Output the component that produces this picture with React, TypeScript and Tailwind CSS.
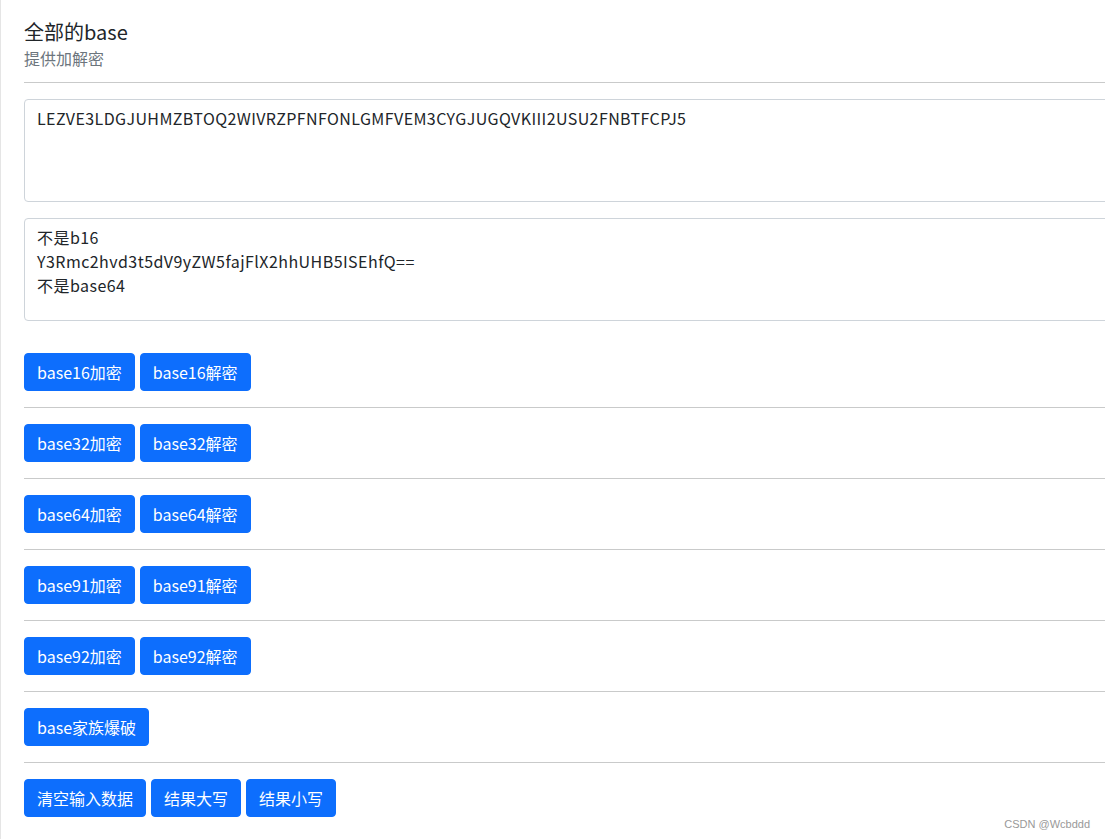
const font = { fontFamily: '"Segoe UI", "Noto Sans CJK SC", "Noto Sans", sans-serif' };

function Btn({ children }: { children: React.ReactNode }) {
  return (
    <button className="h-[38px] px-[12px] rounded-[4px] bg-[#0d6efd] text-white text-[16px] leading-[24px] border border-[#0d6efd] whitespace-nowrap">
      {children}
    </button>
  );
}

function Divider() {
  return <hr className="my-4 border-0 border-t border-[#c9caca]" />;
}

export default function App() {
  const groups = ["16", "32", "64", "91", "92"];

  return (
    <div className="relative h-[839px] overflow-hidden bg-white text-[#212529] border-l border-[#e5e5e5]" style={font}>
      <div className="w-[1160px] pl-[23px] pt-[20px]">
        <h5 className="text-[20px] leading-[24px] font-normal">全部的base</h5>
        <p className="mt-[2px] text-[16px] leading-[24px] text-[#6c757d]">提供加解密</p>
        <hr className="mt-[12px] mb-4 border-0 border-t border-[#c9caca]" />

        <textarea
          className="block w-full h-[103px] px-[12px] py-[6px] text-[16px] leading-[24px] tracking-[0.4px] border border-[#ced4da] rounded-[4px] resize-none outline-none"
          defaultValue="LEZVE3LDGJUHMZBTOQ2WIVRZPFNFONLGMFVEM3CYGJUGQVKIII2USU2FNBTFCPJ5"
        />
        <textarea
          className="block w-full h-[103px] mt-4 px-[12px] py-[6px] text-[16px] leading-[24px] tracking-[0.45px] border border-[#ced4da] rounded-[4px] resize-none outline-none"
          defaultValue={"不是b16\nY3Rmc2hvd3t5dV9yZW5fajFlX2hhUHB5ISEhfQ==\n不是base64"}
        />

        <div className="mt-[32px]">
          {groups.map((g) => (
            <div key={g}>
              <div className="flex gap-[5px]">
                <Btn>base{g}加密</Btn>
                <Btn>base{g}解密</Btn>
              </div>
              <Divider />
            </div>
          ))}
          <div className="flex gap-[5px]">
            <Btn>base家族爆破</Btn>
          </div>
          <Divider />
          <div className="flex gap-[5px]">
            <Btn>清空输入数据</Btn>
            <Btn>结果大写</Btn>
            <Btn>结果小写</Btn>
          </div>
        </div>
      </div>

      <div className="absolute right-[15px] bottom-[7px] text-[11px] text-[#999999]" style={{ fontFamily: '"Liberation Sans", Arial, sans-serif' }}>
        CSDN @Wcbddd
      </div>
    </div>
  );
}
